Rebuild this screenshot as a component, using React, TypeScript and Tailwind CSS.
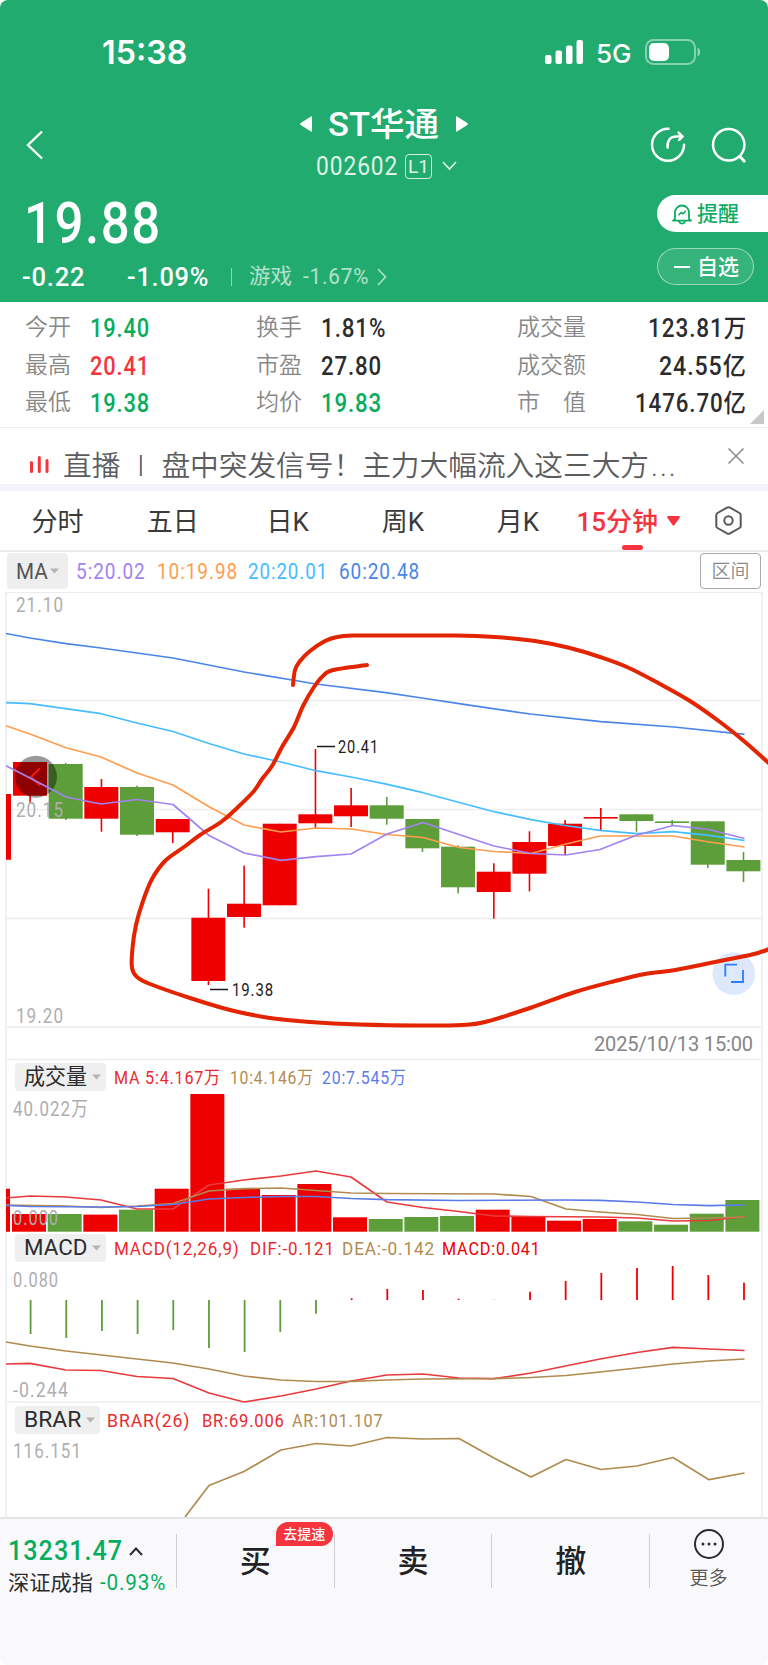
import { useLayoutEffect, useRef, useState } from "react";
import type { ReactNode } from "react";
import clsx from "clsx";

type Point = [number, number];

type Candle = {
    up: boolean;
    open: number;
    close: number;
    high: number;
    low: number;
}

const STEP = 35.67;
const RED = "#ee0000";
const GREEN = "#5d9e3a";

// body top, body bottom, wick top, wick bottom
const candle = (up: boolean, open: number, close: number, high: number, low: number): Candle => ({ up, open, close, high, low });

const candles: Candle[] = [
    candle(true, 762, 795.7, 762, 803.7),
    candle(false, 764, 818.7, 763, 820),
    candle(true, 787, 818.7, 779, 831.7),
    candle(false, 787, 834.7, 785.7, 836),
    candle(true, 819, 832.3, 819, 843),
    candle(true, 917.7, 981, 888.7, 985),
    candle(true, 903.7, 917, 865.7, 927.7),
    candle(true, 823.7, 905.3, 823.7, 905.3),
    candle(true, 814.3, 823.3, 749, 828.7),
    candle(true, 805.3, 816.3, 788, 827),
    candle(false, 805.3, 818.7, 797, 824.7),
    candle(false, 819, 848.3, 819, 852),
    candle(false, 846.7, 887.3, 845.3, 893.3),
    candle(true, 871.7, 892, 863.3, 918.7),
    candle(true, 842, 873.7, 831.3, 891.3),
    candle(true, 823.7, 846, 820, 855),
    candle(true, 817, 818.6, 808, 831),
    candle(false, 814.3, 821, 814.3, 831.7),
    candle(false, 821.4, 823, 820, 825),
    candle(false, 821.3, 864.7, 821.3, 868),
    candle(false, 860, 871.3, 852, 882),
];

const volumes: [boolean, number][] = [
    [true, 1214], [false, 1214], [true, 1214.6], [false, 1209.7], [true, 1188.7], [true, 1094], [true, 1188.7],
    [true, 1195], [true, 1184], [true, 1217.3], [false, 1219], [false, 1217], [false, 1216], [true, 1209.7],
    [true, 1217], [true, 1220.7], [true, 1219], [false, 1221.3], [false, 1224.7], [false, 1213.7], [false, 1200],
];

const macdBars = [
    1334, 1338, 1331, 1334, 1330, 1348, 1352, 1332, 1313.7, 1298.3, 1289,
    1290, 1298.7, 1299.8, 1291.7, 1281, 1273, 1268, 1266, 1275, 1282.7,
];

const lines: { color: string; points: Point[] }[] = [
    { color: "#4a86e8", points: [[6, 633.5], [30, 638], [66, 643.7], [101, 648], [137, 653], [173, 658], [244, 672], [316, 684], [384, 692.3], [422, 698], [464, 704.3], [530, 714], [601, 721.7], [674, 727], [744.5, 734.3]] },
    { color: "#46bdff", points: [[6, 702.6], [30, 703.7], [101, 713.7], [137, 723], [173, 731.5], [209, 743.5], [244, 754], [281, 762], [316, 770.7], [351, 777], [384, 783.7], [423, 792.7], [494, 811.7], [531, 819.7], [565, 825.5], [600, 830.3], [637, 833.7], [673, 831.7], [709, 835.3], [744.5, 840.5]] },
    { color: "#ff9d4f", points: [[6, 725.7], [30, 734], [66, 747.7], [101, 757], [137, 773], [173, 785], [209, 806.7], [244, 825], [281, 832], [316, 828], [351, 829], [387, 834.5], [423, 837.5], [459, 847.5], [494, 851.5], [531, 853.5], [566, 844], [600, 836], [673, 836], [709, 842], [744.5, 847]] },
    { color: "#a283f2", points: [[6, 765.7], [30, 778], [66, 797], [101, 804], [137, 799.5], [173, 804.5], [209, 835.5], [244, 853], [281, 860.3], [316, 856.7], [351, 854], [387, 834], [423, 822.5], [459, 834.5], [494, 846], [531, 853.5], [566, 855], [600, 849.5], [637, 835], [673, 825.5], [709, 829.5], [744.5, 838.5]] },
    { color: "#ea3a3d", points: [[6, 1198], [30, 1196], [66, 1197], [101, 1200], [137, 1209], [173, 1209], [209, 1185], [244, 1180], [281, 1176], [316, 1171], [351, 1177], [387, 1202], [423, 1207.5], [459, 1211.5], [494, 1216], [531, 1216.5], [600, 1217], [637, 1218], [673, 1221], [709, 1220.5], [744.5, 1216.7]] },
    { color: "#b08b50", points: [[6, 1205], [66, 1206], [101, 1207.5], [137, 1206], [173, 1203.5], [209, 1191], [244, 1188.7], [281, 1188], [316, 1190.5], [351, 1193], [387, 1193.5], [494, 1194], [531, 1196.5], [566, 1209], [600, 1212], [637, 1214.5], [673, 1218.5], [709, 1218], [744.5, 1217]] },
    { color: "#5b7be8", points: [[6, 1205.5], [30, 1206.5], [101, 1207], [137, 1206.5], [173, 1204.5], [209, 1199], [244, 1197.5], [281, 1196.5], [316, 1196.5], [351, 1198.5], [387, 1199.7], [459, 1200.5], [566, 1200], [600, 1200.3], [637, 1202], [673, 1204.5], [709, 1205.7], [744.5, 1205]] },
    { color: "#ea3a3d", points: [[6, 1364], [30, 1363.3], [66, 1370], [101, 1370.5], [137, 1376.5], [173, 1378.5], [209, 1393], [244, 1402], [281, 1396], [316, 1389], [351, 1381], [387, 1375], [423, 1374], [459, 1378], [494, 1378.7], [531, 1373], [600, 1359], [637, 1352.5], [673, 1347.3], [709, 1349], [744.5, 1350.5]] },
    { color: "#b08b50", points: [[6, 1342], [30, 1346], [66, 1351], [137, 1359], [173, 1363], [209, 1369], [244, 1376], [281, 1380], [316, 1381.5], [351, 1381.3], [387, 1380], [423, 1379], [494, 1378.7], [531, 1377.5], [566, 1375.5], [600, 1372], [637, 1368], [673, 1364], [709, 1361], [744.5, 1359]] },
    { color: "#b08b50", points: [[185, 1517], [209, 1485.5], [244, 1471.5], [281, 1450], [316, 1443.5], [351, 1446], [387, 1437.5], [423, 1439], [459, 1438.5], [494, 1458], [531, 1477], [566, 1459.5], [601, 1469.5], [637, 1466], [673, 1457.5], [709, 1479.7], [744.5, 1473]] },
];

const pen: Point[][] = [
    [[293, 685], [295, 670], [300, 661], [310, 651], [325, 641], [337, 637], [352, 635.5], [384, 635.5], [455, 635.5], [495, 637], [535, 641], [570, 648], [600, 657], [628, 667.5], [660, 684], [690, 701], [720, 722], [745, 742], [772, 766]],
    [[367, 665], [333, 670], [323, 676], [314, 687], [303, 706], [294, 727], [282, 747], [272, 766], [262, 779], [254, 791], [237, 808], [221, 822], [200, 835], [184, 847], [165, 861], [152, 879], [143, 901], [136, 925], [132.5, 948], [132, 968], [137, 977], [150, 984], [190, 998], [230, 1010], [270, 1018], [310, 1022], [360, 1024.5], [420, 1025.5], [462, 1025], [485, 1022], [530, 1008], [575, 992], [615, 981], [645, 974], [675, 970], [710, 963], [745, 956], [758, 953], [772, 948]],
];

// Catmull-Rom spline as cubic beziers
const smooth = (pts: Point[]) =>
    pts.slice(1).reduce((d, p, i) => {
        const a = pts[i - 1] ?? pts[i];
        const b = pts[i];
        const c = pts[i + 2] ?? p;
        return `${d} C${b[0] + (p[0] - a[0]) / 6} ${b[1] + (p[1] - a[1]) / 6} ${p[0] - (c[0] - b[0]) / 6} ${p[1] - (c[1] - b[1]) / 6} ${p[0]} ${p[1]}`;
    }, `M${pts[0][0]} ${pts[0][1]}`);

type FitProps = {
    w: number;
    className?: string;
    children: ReactNode;
}

// Condenses a run of text to the width of its column
const Fit = ({ w, className, children }: FitProps) => {
    const ref = useRef<HTMLSpanElement>(null);
    const [scale, setScale] = useState(1);

    useLayoutEffect(() => {
        if (ref.current) setScale(w / ref.current.offsetWidth);
    }, [w]);

    return (
        <span className={clsx("inline-flex shrink-0 items-center whitespace-nowrap leading-none", className)} style={{ width: w }}>
            <span ref={ref} className="inline-block shrink-0 origin-left" style={{ transform: `scaleX(${scale})` }}>{children}</span>
        </span>
    );
};

const StatusBar = () => (
    <div className="flex h-[104px] items-center pl-[102px] text-white">
        <Fit w={85} className="font-['Inter'] text-[33px] font-semibold pt-[1px]">15:38</Fit>
        <svg className="ml-[358px]" width="38" height="24" viewBox="0 0 38 24" fill="currentColor">
            <rect x="0" y="15" width="6.5" height="9" rx="2" />
            <rect x="10.5" y="10.5" width="6.5" height="13.5" rx="2" />
            <rect x="21" y="5.5" width="6.5" height="18.5" rx="2" />
            <rect x="31.5" y="0" width="6.5" height="24" rx="2" />
        </svg>
        <Fit w={36} className="ml-[13px] mt-[3px] font-['Inter'] text-[26px] font-medium">5G</Fit>
        <svg className="ml-[13px]" width="56" height="26" viewBox="0 0 56 26" fill="none">
            <rect x="1" y="1" width="49" height="24" rx="7.5" stroke="#fff" strokeOpacity="0.45" strokeWidth="2" />
            <rect x="4" y="4" width="20" height="18" rx="5" fill="#fff" />
            <path d="M52.5 8.5a5 5 0 0 1 0 9z" fill="#fff" fillOpacity="0.5" />
        </svg>
    </div>
);

const TitleBar = () => (
    <div className="flex h-[86px] justify-between text-white">
        <svg className="ml-[25px] mt-[26px]" width="20" height="30" viewBox="0 0 20 30" fill="none" stroke="currentColor" strokeWidth="2.4">
            <path d="M17 1.5 3 15l14 13.5" />
        </svg>
        <div className="ml-[72px] flex w-[168px] flex-col items-center">
            <div className="flex h-[40px] w-full items-center justify-between">
                <svg width="12" height="16" viewBox="0 0 12 16" fill="currentColor"><path d="M12 1v14q0 1-1 .500L.7 9q-1-1 0-2L11 .500q1-.500 1 .500z" /></svg>
                <Fit w={111} className="text-[33px] font-medium">ST华通</Fit>
                <svg width="12" height="16" viewBox="0 0 12 16" fill="currentColor"><path d="M0 1v14q0 1 1 .500L11.300 9q1-1 0-2L1 .500Q0 0 0 1z" /></svg>
            </div>
            <div className="mt-[9px] flex items-center pl-[6px]">
                <Fit w={82} className="pt-[1px] text-[25px] tracking-[0.04em] text-white/85">002602</Fit>
                <span className="ml-[7px] flex h-[25px] w-[27px] items-center justify-center rounded-[4px] border border-white/80 text-[19px] leading-none text-white/85">L1</span>
                <svg className="ml-[10px]" width="15" height="10" viewBox="0 0 15 10" fill="none" stroke="currentColor" strokeOpacity="0.85" strokeWidth="1.600"><path d="m1 1 6.500 7L14 1" /></svg>
            </div>
        </div>
        <div className="mr-[21px] mt-[23px] flex gap-[25px]">
            <svg width="36" height="36" viewBox="0 0 36 36" fill="none" stroke="currentColor" strokeWidth="2.500" strokeLinecap="round" strokeLinejoin="round">
                <path d="M18.500 1.700A16 16 0 1 0 34 17.700" />
                <path d="M17.600 20.600c-.600-7 2.400-11 9.400-11h5.300" />
                <path d="m28.600 5.700 3.800 3.900-3.300 3.400" />
            </svg>
            <svg width="36" height="36" viewBox="0 0 36 36" fill="none" stroke="currentColor" strokeWidth="2.500" strokeLinecap="round">
                <circle cx="17.700" cy="17.700" r="15.700" />
                <path d="m28.800 29.500 4.300 4.600" strokeWidth="3" />
            </svg>
        </div>
    </div>
);

const Price = () => (
    <div className="flex h-[112px] justify-between text-white">
        <div>
            <Fit w={138} className="ml-[24px] mt-[4px] h-[58px] text-[58px] font-medium tracking-[0.03em]">19.88</Fit>
            <div className="flex h-[28px] items-center pl-[22px] pt-[21px]">
                <Fit w={63} className="text-[26px] font-medium tracking-[0.03em]">-0.22</Fit>
                <Fit w={82} className="ml-[42px] text-[26px] font-medium tracking-[0.03em]">-1.09%</Fit>
                <span className="ml-[22px] h-[18px] w-px bg-white/50" />
                <div className="ml-[17px] flex items-center text-white/65">
                    <Fit w={43} className="text-[21px]">游戏</Fit>
                    <Fit w={66} className="ml-[11px] text-[22px] tracking-[0.04em]">-1.67%</Fit>
                    <svg className="ml-[8px]" width="10" height="18" viewBox="0 0 10 18" fill="none" stroke="currentColor" strokeWidth="1.600"><path d="m1 1 7.500 8L1 17" /></svg>
                </div>
            </div>
        </div>
        <div className="flex w-[111px] flex-col gap-[16px] pt-[5px]">
            <div className="flex h-[37px] items-center rounded-l-full bg-white pl-[14px] text-[#0fab62]">
                <svg width="22" height="22" viewBox="0 0 22 22" fill="none" stroke="currentColor" strokeWidth="1.800" strokeLinejoin="round" strokeLinecap="round">
                    <path d="M4 16V9.500a7 7 0 0 1 14 0V16l2 1.600H2z" />
                    <path d="M8 18.500c1 2.700 5 2.700 6 0" />
                    <path d="m8 11.800 2.300-2.300 1.700 1.300 2.500-2.500" strokeWidth="1.600" />
                </svg>
                <span className="ml-[4px] pt-[1px] text-[21px] font-medium leading-none">提醒</span>
            </div>
            <div className="flex h-[37px] w-[97px] items-center rounded-full border border-white/50 bg-white/10 pl-[16px]">
                <span className="h-[2px] w-[16px] bg-white" />
                <span className="ml-[7px] pt-[1px] text-[21px] font-medium leading-none">自选</span>
            </div>
        </div>
    </div>
);

type StatProps = {
    label: string;
    value: string;
    w: number;
    color?: string;
}

const stats: StatProps[][] = [
    [
        { label: "今开", value: "19.40", w: 60, color: "text-[#07ad5c]" },
        { label: "最高", value: "20.41", w: 60, color: "text-[#f5343e]" },
        { label: "最低", value: "19.38", w: 60, color: "text-[#07ad5c]" },
    ],
    [
        { label: "换手", value: "1.81%", w: 65 },
        { label: "市盈", value: "27.80", w: 61 },
        { label: "均价", value: "19.83", w: 61, color: "text-[#07ad5c]" },
    ],
    [
        { label: "成交量", value: "123.81万", w: 99 },
        { label: "成交额", value: "24.55亿", w: 88 },
        { label: "市　值", value: "1476.70亿", w: 112 },
    ],
];

const Stats = () => (
    <section className="relative flex h-[126px] border-b border-[#ececee] pl-[25px] pr-[21px] pt-[7px]">
        {stats.map((column, c) => (
            <div key={c} className={clsx(c === 0 && "w-[231px]", c === 1 && "w-[261px]", c === 2 && "flex-1")}>
                {column.map(({ label, value, w, color }) => (
                    <div key={label} className="flex h-[37.500px] items-center">
                        <span className="text-[23px] leading-none text-[#888] font-[350]">{label}</span>
                        <Fit w={w} className={clsx("mt-[2px] text-[25.500px] font-medium tracking-[0.04em]", c === 2 ? "ml-auto" : "ml-[19px]", color ?? "text-[#2c2c2e]")}>{value}</Fit>
                    </div>
                ))}
            </div>
        ))}
        <svg className="absolute bottom-[3px] right-[4px]" width="14" height="14" viewBox="0 0 14 14" fill="#c8c8ca"><path d="M14 0v14H0z" /></svg>
    </section>
);

const LiveBanner = () => (
    <section className="flex h-[63px] border-b-[7px] border-[#f2f4f9] pl-[30px] text-[#5c5c5e]">
        <svg className="mt-[28px]" width="19" height="17" viewBox="0 0 19 17" fill="#f5343e">
            <rect x="0" y="5" width="3" height="12" rx="1.500" />
            <rect x="7.800" y="0" width="3" height="17" rx="1.500" />
            <rect x="15.500" y="3" width="3" height="14" rx="1.500" />
        </svg>
        <div className="mt-[23px] flex h-[30px] items-center text-[28.700px] font-[350] leading-none">
            <span className="ml-[14px]">直播</span>
            <span className="w-[41px] text-center font-['Roboto']">I</span>
            <span>盘中突发信号！主力大幅流入这三大方</span>
            <span className="ml-[2px] font-['Roboto'] tracking-[2px]">...</span>
        </div>
        <svg className="ml-auto mr-[24px] mt-[20px]" width="16" height="16" viewBox="0 0 16 16" stroke="#8a8a8c" strokeWidth="1.500"><path d="m.5 .5 15 15M15.500 .5l-15 15" /></svg>
    </section>
);

const tabs = ["分时", "五日", "日K", "周K", "月K"];

const Tabs = () => (
    <nav className="flex h-[61px] items-center border-b-2 border-[#ececee] text-[26px] leading-none text-[#3a3a3c]">
        {tabs.map(tab => (
            <button key={tab} className="w-[115.100px] pt-[2px] text-center">{tab}</button>
        ))}
        <button className="relative flex h-full items-center text-[#f5343e] font-medium">
            <Fit w={82} className="ml-[1px] pt-[2px]">15分钟</Fit>
            <svg className="ml-[9px]" width="13" height="10" viewBox="0 0 13 10" fill="currentColor"><path d="M1 0h11q1.500 .5 .500 2L7.500 9q-1 1-2 0L.5 2Q-.5 .5 1 0z" /></svg>
            <span className="absolute bottom-0 left-[47px] h-[5px] w-[21px] rounded-full bg-[#f5343e]" />
        </button>
        <svg className="ml-[35px]" width="27" height="29" viewBox="0 0 27 29" fill="none" stroke="#58585a" strokeWidth="2" strokeLinejoin="round">
            <path d="M12 1.600q1.500-.8 3 0l9.500 5.400q1.200.8 1.200 2v11q0 1.300-1.200 2L15 27.400q-1.500.8-3 0L2.500 22q-1.200-.7-1.200-2V9q0-1.200 1.200-2z" />
            <circle cx="13.500" cy="14.500" r="4.200" />
        </svg>
    </nav>
);

const Caret = ({ className }: { className?: string }) => (
    <svg className={className} width="9" height="6" viewBox="0 0 9 6" fill="#b4b4b6"><path d="M0 .5h9L4.500 5.500z" /></svg>
);

const Averages = () => (
    <div className="flex h-[40px] items-start px-[7px] pt-[1px] text-[22px] leading-none">
        <button className="flex h-[36px] w-[61px] items-center rounded-[4px] bg-[#eee] pl-[9px] text-[#555]">
            <Fit w={32} className="pt-[1px]">MA</Fit>
            <Caret className="ml-[2px]" />
        </button>
        <div className="flex h-[36px] items-center pt-[1px] tracking-[0.05em]">
            <Fit w={70} className="ml-[8px] text-[#a283f2]">5:20.02</Fit>
            <Fit w={81} className="ml-[11px] text-[#ff9d4f]">10:19.98</Fit>
            <Fit w={80} className="ml-[10px] text-[#46bdff]">20:20.01</Fit>
            <Fit w={81} className="ml-[11px] text-[#4a86e8]">60:20.48</Fit>
        </div>
        <button className="ml-auto flex h-[36px] w-[61px] items-center justify-center rounded-[4px] border border-[#a9a9ab] pt-[1px] text-[19px] font-[350] text-[#8a8a8c]">区间</button>
    </div>
);

type IndicatorRowProps = {
    name: string;
    nameWidth: number;
    items: { text: string; w: number; gap: number; color: string }[];
}

const IndicatorRow = ({ name, nameWidth, items }: IndicatorRowProps) => (
    <div className="flex h-[28px] items-center pl-[15px] text-[18.500px] leading-none">
        <button className="flex h-full items-center rounded-[4px] bg-[#efefef] pl-[9px] pr-[5px] text-[22px] text-[#2c2c2e]">
            <Fit w={nameWidth}>{name}</Fit>
            <Caret className="ml-[5px]" />
        </button>
        {items.map(({ text, w, gap, color }) => (
            <span key={text} className="flex items-center pt-[2px] tracking-[0.05em]" style={{ marginLeft: gap }}>
                <Fit w={w} className={color}>{text}</Fit>
            </span>
        ))}
    </div>
);

type AxisTextProps = {
    x: number;
    y: number;
    w: number;
    size?: number;
    fill?: string;
    children: string;
}

const AxisText = ({ x, y, w, size = 20, fill = "#aeaeb0", children }: AxisTextProps) => (
    <text x={x} y={y} textLength={w} lengthAdjust="spacingAndGlyphs" fontSize={size} fill={fill} letterSpacing="0.06em">{children}</text>
);

const Chart = () => (
    <svg className="absolute inset-0" width="768" height="925" viewBox="0 592 768 925" fill="none">
        <g stroke="#ededef" strokeWidth="1.500">
            <path d="M6 1517V592.500H762V1517" />
            <path d="M6 700.500H762M6 809.500H762M6 918.500H762M6 1027H762M6 1059.500H762M6 1402H762" />
        </g>

        <path d="M6 794h5v65.700H6zM6 1188.700h4v43H6z" fill={RED} />
        {candles.map(({ up, open, close, high, low }, i) => (
            <g key={i} fill={up ? RED : GREEN}>
                <rect x={13 + STEP * i} y={open} width="34" height={close - open} />
                <rect x={29.300 + STEP * i} y={high} width="1.600" height={low - high} />
            </g>
        ))}
        {volumes.map(([up, top], i) => (
            <rect key={i} x={12 + STEP * i} y={top} width="34" height={1231.7 - top} fill={up ? RED : GREEN} />
        ))}
        {macdBars.map((end, i) => (
            <path key={i} d={`M${30.6 + STEP * i} 1300V${end}`} stroke={end > 1300 ? GREEN : RED} strokeWidth="1.800" />
        ))}

        <AxisText x={16} y={611.500} w={48}>21.10</AxisText>
        <AxisText x={16} y={817} w={48}>20.15</AxisText>
        <AxisText x={16} y={1022.500} w={48}>19.20</AxisText>
        <text x={594} y={1051} fontSize={20} fill="#858587" textLength={159}>2025/10/13 15:00</text>
        <AxisText x={13} y={1115.500} w={76}>40.022万</AxisText>
        <AxisText x={13} y={1225} w={46}>0.000</AxisText>
        <AxisText x={13} y={1286.500} w={46}>0.080</AxisText>
        <AxisText x={13} y={1396.500} w={56}>-0.244</AxisText>
        <AxisText x={13} y={1458} w={69}>116.151</AxisText>

        <circle cx="36" cy="776.700" r="21" fill="#000" fillOpacity="0.400" />
        <path d="M40 768.500 31 777l9 8.500" stroke="#f01818" strokeWidth="2.200" />

        {lines.map(({ color, points }, i) => (
            <polyline key={i} points={points.join(" ")} stroke={color} strokeWidth="1.700" strokeLinejoin="round" />
        ))}

        <path d="M317 746.500h18M210 989.500h18" stroke="#1c1c1e" strokeWidth="1.600" />
        <AxisText x={338} y={753} w={41} size={18} fill="#1c1c1e">20.41</AxisText>
        <AxisText x={232} y={996} w={42} size={18} fill="#1c1c1e">19.38</AxisText>

        <circle cx="733.700" cy="973.600" r="21.300" fill="#dde8fd" />
        <path d="M725.300 976.500V964.700H737M743 970v12H731" stroke="#2b7cff" strokeWidth="1.800" />

        {pen.map((stroke, i) => (
            <path key={i} d={smooth(stroke)} stroke="#e32400" strokeWidth="4" strokeLinecap="round" strokeLinejoin="round" />
        ))}
    </svg>
);

const ChartSection = () => (
    <section className="relative h-[925px]">
        <Chart />
        <div className="relative pt-[471px]">
            <IndicatorRow
                name="成交量"
                nameWidth={63}
                items={[
                    { text: "MA 5:4.167万", w: 107, gap: 8, color: "text-[#ea2a2d]" },
                    { text: "10:4.146万", w: 84, gap: 9, color: "text-[#b08b50]" },
                    { text: "20:7.545万", w: 85, gap: 8, color: "text-[#5b7be8]" },
                ]}
            />
        </div>
        <div className="relative pt-[143px]">
            <IndicatorRow
                name="MACD"
                nameWidth={63}
                items={[
                    { text: "MACD(12,26,9)", w: 126, gap: 8, color: "text-[#ea2a2d]" },
                    { text: "DIF:-0.121", w: 85, gap: 10, color: "text-[#ea2a2d]" },
                    { text: "DEA:-0.142", w: 93, gap: 7, color: "text-[#b08b50]" },
                    { text: "MACD:0.041", w: 99, gap: 7, color: "text-[#ee0000]" },
                ]}
            />
        </div>
        <div className="relative pt-[144px]">
            <IndicatorRow
                name="BRAR"
                nameWidth={57}
                items={[
                    { text: "BRAR(26)", w: 83, gap: 7, color: "text-[#ea2a2d]" },
                    { text: "BR:69.006", w: 83, gap: 12, color: "text-[#ea2a2d]" },
                    { text: "AR:101.107", w: 91, gap: 7, color: "text-[#b08b50]" },
                ]}
            />
        </div>
    </section>
);

const TradeButton = ({ label, badge }: { label: string; badge?: string }) => (
    <button className="relative flex h-[54px] w-[157.700px] items-center justify-center border-l border-[#d0d0d4] text-[31px] font-medium leading-none text-[#222224]">
        {label}
        {badge && (
            <span className="absolute right-[1px] top-[-12px] flex h-[24px] w-[57px] items-center justify-center rounded-full rounded-bl-none bg-[#f5343e] text-[14px] text-white">{badge}</span>
        )}
    </button>
);

const BottomBar = () => (
    <footer className="flex h-[148px] items-start border-t-2 border-[#e5e5e9] bg-[#f9f9fc] pt-[15px]">
        <div className="w-[176px] pl-[8px] pt-[3px] leading-none">
            <div className="flex h-[28px] items-center text-[#07ad5c]">
                <Fit w={115} className="text-[28px] font-medium tracking-[0.04em]">13231.47</Fit>
                <svg className="ml-[6px]" width="14" height="9" viewBox="0 0 14 9" fill="none" stroke="#2c2c2e" strokeWidth="2"><path d="m1 8 6-6.500L13 8" /></svg>
            </div>
            <div className="mt-[6px] flex h-[24px] items-center">
                <Fit w={85} className="text-[21px] text-[#2c2c2e]">深证成指</Fit>
                <Fit w={66} className="ml-[7px] text-[22px] text-[#07ad5c] tracking-[0.04em]">-0.93%</Fit>
            </div>
        </div>
        <TradeButton label="买" badge="去提速" />
        <TradeButton label="卖" />
        <TradeButton label="撤" />
        <button className="flex h-[54px] flex-1 flex-col items-center border-l border-[#d0d0d4] pr-[1px] text-[19px] font-[350] leading-none text-[#555]">
            <svg className="-mt-[5px] shrink-0" width="30" height="30" viewBox="0 0 30 30" fill="#2c2c2e">
                <circle cx="15" cy="15" r="14" fill="none" stroke="#2c2c2e" strokeWidth="2" />
                <circle cx="9" cy="15" r="1.500" />
                <circle cx="15" cy="15" r="1.500" />
                <circle cx="21" cy="15" r="1.500" />
            </svg>
            <span className="mt-[10px]">更多</span>
        </button>
    </footer>
);

export default function App() {
    return (
        <div className="h-[1665px] w-[768px] overflow-hidden bg-white font-['Roboto','Noto_Sans_CJK_SC',sans-serif]">
            <div className="h-full overflow-hidden rounded-[8px] bg-white">
                <header className="h-[302px] bg-[#21ab6e]">
                    <StatusBar />
                    <TitleBar />
                    <Price />
                </header>
                <Stats />
                <LiveBanner />
                <Tabs />
                <Averages />
                <ChartSection />
                <BottomBar />
            </div>
        </div>
    );
}
